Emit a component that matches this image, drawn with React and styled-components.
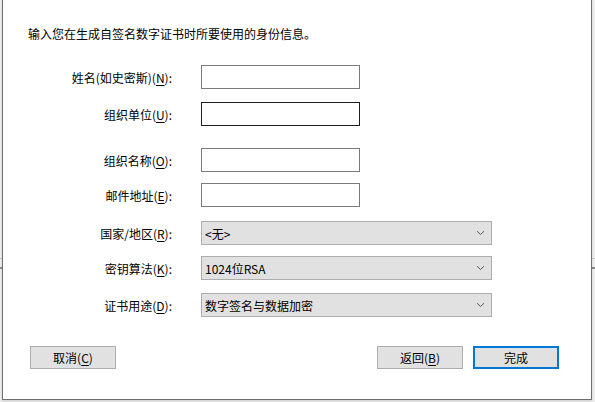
import styled, { createGlobalStyle } from "styled-components";

const GlobalStyle = createGlobalStyle`
  html, body {
    margin: 0;
    padding: 0;
  }
  body {
    width: 595px;
    height: 402px;
    overflow: hidden;
    font-family: "Noto Sans CJK SC", "Noto Sans", sans-serif;
    font-size: 12px;
    color: #000;
    background:
      linear-gradient(#c9c9c9, #c9c9c9) 0 258px / 100% 1px no-repeat,
      linear-gradient(#8a8a8a, #8a8a8a) 0 267px / 100% 2px no-repeat,
      #eeeeee;
  }
`;

const Window = styled.div`
  box-sizing: border-box;
  margin: -1px 0 0 2px;
  width: 590px;
  height: 401px;
  background: #fff;
  border: 1px solid #6f6f6f;
  box-shadow: 0 1px 2px rgba(0, 0, 0, 0.15);
  display: flex;
  flex-direction: column;
`;

const Intro = styled.p`
  margin: 25px 0 0 25px;
  line-height: 17px;
  white-space: nowrap;
`;

const Form = styled.div`
  display: grid;
  grid-template-columns: 169px 291px;
  column-gap: 29px;
  margin-top: 23px;
`;

const Label = styled.label`
  grid-column: 1;
  margin-top: ${(p) => p.$top}px;
  height: 24px;
  display: flex;
  align-items: center;
  justify-content: flex-end;
  white-space: nowrap;

  u {
    text-decoration: underline;
    text-underline-offset: 2px;
  }
`;

const TextBox = styled.input`
  grid-column: 2;
  margin-top: ${(p) => p.$top}px;
  box-sizing: border-box;
  width: 159px;
  height: 24px;
  border: 1px solid ${(p) => (p.$active ? "#1f1f1f" : "#7a7a7a")};
  background: #fff;
  outline: none;
  padding: 0 4px;
  font: inherit;
`;

const Combo = styled.div`
  grid-column: 2;
  margin-top: ${(p) => p.$top}px;
  box-sizing: border-box;
  width: 291px;
  height: 24px;
  border: 1px solid #adadad;
  background: #e1e1e1;
  display: flex;
  align-items: center;
  justify-content: space-between;
  padding: 0 6px 0 3px;
  white-space: nowrap;

  svg {
    display: block;
  }
`;

const ButtonBar = styled.div`
  display: flex;
  align-items: center;
  margin-top: 29px;
  padding: 0 32px 0 27px;
`;

const Spacer = styled.div`
  flex: 1;
`;

const Button = styled.button`
  box-sizing: border-box;
  width: 86px;
  height: 23px;
  margin-left: ${(p) => p.$gap || 0}px;
  background: #e1e1e1;
  border: ${(p) => (p.$primary ? "2px solid #0078d7" : "1px solid #adadad")};
  font: inherit;
  color: #000;
  padding: 0;
  display: flex;
  align-items: center;
  justify-content: center;

  u {
    text-decoration: underline;
    text-underline-offset: 2px;
  }
`;

const Chevron = () => (
  <svg width="9" height="6" viewBox="0 0 9 6">
    <path d="M1 1.2 L4.5 4.5 L8 1.2" fill="none" stroke="#5a5a5a" strokeWidth="1" />
  </svg>
);

const App = () => {
  return (
    <>
      <GlobalStyle />
      <Window>
        <Intro>输入您在生成自签名数字证书时所要使用的身份信息。</Intro>
        <Form>
          <Label $top={0}>
            姓名(如史密斯)(<u>N</u>):
          </Label>
          <TextBox $top={0} />

          <Label $top={13}>
            组织单位(<u>U</u>):
          </Label>
          <TextBox $top={13} $active />

          <Label $top={22}>
            组织名称(<u>O</u>):
          </Label>
          <TextBox $top={22} />

          <Label $top={11}>
            邮件地址(<u>E</u>):
          </Label>
          <TextBox $top={11} />

          <Label $top={14}>
            国家/地区(<u>R</u>):
          </Label>
          <Combo $top={14}>
            <span>&lt;无&gt;</span>
            <Chevron />
          </Combo>

          <Label $top={11}>
            密钥算法(<u>K</u>):
          </Label>
          <Combo $top={11}>
            <span>1024位RSA</span>
            <Chevron />
          </Combo>

          <Label $top={13}>
            证书用途(<u>D</u>):
          </Label>
          <Combo $top={13}>
            <span>数字签名与数据加密</span>
            <Chevron />
          </Combo>
        </Form>
        <ButtonBar>
          <Button>
            取消(<u>C</u>)
          </Button>
          <Spacer />
          <Button>
            返回(<u>B</u>)
          </Button>
          <Button $gap={10} $primary>
            完成
          </Button>
        </ButtonBar>
      </Window>
    </>
  );
};

export default App;
